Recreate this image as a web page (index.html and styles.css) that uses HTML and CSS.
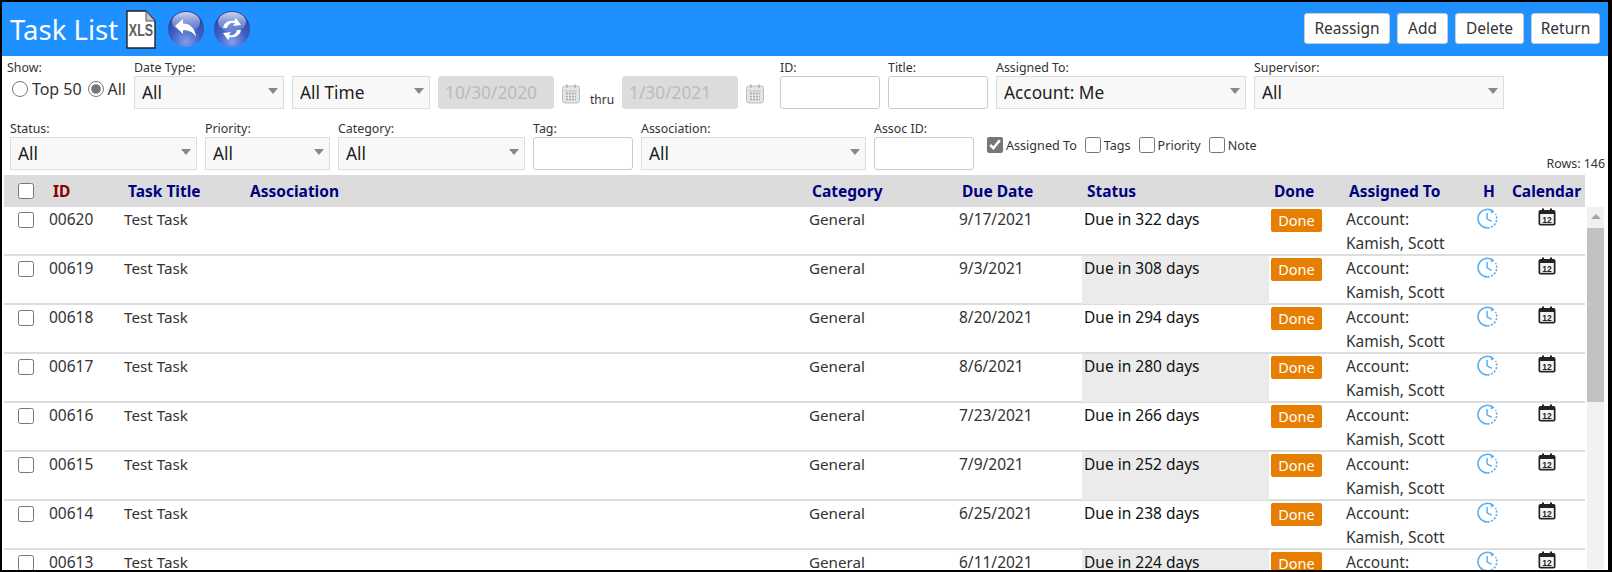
FILE: index.html
```html
<!DOCTYPE html>
<html lang="en">
<head>
    <meta charset="UTF-8">
    <title>Task List</title>
    <link rel="stylesheet" href="styles.css">
</head>
<body>
    <svg class="defs" width="0" height="0">
        <defs>
            <radialGradient id="glossy" cx="50%" cy="85%" r="75%">
                <stop offset="0%" stop-color="#7f9fee"/>
                <stop offset="55%" stop-color="#3f5fc4"/>
                <stop offset="100%" stop-color="#2c479f"/>
            </radialGradient>
            <linearGradient id="shine" x1="0" y1="0" x2="0" y2="1">
                <stop offset="0%" stop-color="#dfe8fb" stop-opacity="0.9"/>
                <stop offset="100%" stop-color="#8ba6ea" stop-opacity="0.3"/>
            </linearGradient>
            <symbol id="clock" viewBox="0 0 20 20">
                <path d="M15.5 3.4A8.8 8.8 0 1 0 10 18.9" fill="none" stroke="#5aaef0" stroke-width="1.5"/>
                <path d="M10 18.9a8.8 8.8 0 0 0 7.6-13.2" fill="none" stroke="#5aaef0" stroke-width="1.5" stroke-dasharray="2 1.4"/>
                <path d="M13.2 1.2l3.4 2.4-3.4 1.6z" fill="#5aaef0"/>
                <path d="M9.6 4.8v5.6l4.4 2.4" fill="none" stroke="#5aaef0" stroke-width="1.4"/>
            </symbol>
            <symbol id="calendar" viewBox="0 0 18 18">
                <rect x="0.5" y="2" width="17" height="15.5" rx="2" fill="#222"/>
                <rect x="4" y="0.5" width="2" height="3.5" fill="#222"/>
                <rect x="12" y="0.5" width="2" height="3.5" fill="#222"/>
                <rect x="2.2" y="6" width="13.6" height="9.8" fill="#f4f4f4"/>
                <text x="9" y="14.6" text-anchor="middle" class="cal-num">12</text>
            </symbol>
            <symbol id="picker" viewBox="0 0 18 20">
                <rect x="0.5" y="2" width="17" height="17" rx="2.5" fill="#e4e4e4" stroke="#bdbdbd"/>
                <rect x="4" y="0.5" width="1.6" height="3.5" fill="#b5b5b5"/>
                <rect x="12.4" y="0.5" width="1.6" height="3.5" fill="#b5b5b5"/>
                <path d="M3 7h12" stroke="#bdbdbd"/>
                <path d="M4 9.5h10M4 12.5h10M4 15.5h10" stroke="#a9a9a9" stroke-width="1.6" stroke-dasharray="2 1"/>
            </symbol>
        </defs>
    </svg>

    <div class="frame">
        <header class="topbar">
            <div class="topbar-left">
                <h1>Task List</h1>
                <svg class="xls" width="30" height="39" viewBox="0 0 30 39">
                    <path d="M1 1h19l9 10v27H1z" fill="#fff" stroke="#222" stroke-width="1.4"/>
                    <path d="M20 1v10h9z" fill="#c8c8c8" stroke="#555"/>
                    <text text-anchor="middle" transform="translate(15 26) scale(1 1.3)" class="xls-text">XLS</text>
                </svg>
                <svg class="round-btn" width="36" height="36" viewBox="0 0 36 36">
                    <circle cx="18" cy="18" r="18" fill="url(#glossy)"/>
                    <ellipse cx="18" cy="11" rx="14" ry="10" fill="url(#shine)"/>
                    <path d="M7 15l8-7v4.500c7 0 12 4.500 13 13.500-3-5-7-7-13-7v4z" fill="#fff"/>
                </svg>
                <svg class="round-btn" width="36" height="36" viewBox="0 0 36 36">
                    <circle cx="18" cy="18" r="18" fill="url(#glossy)"/>
                    <ellipse cx="18" cy="11" rx="14" ry="10" fill="url(#shine)"/>
                    <path d="M9 17c1-5 5-8 11-7l2-3 5 7-8 1 2-3c-4-1-7 1-8 5zM27 19c-1 5-5 8-11 7l-2 3-5-7 8-1-2 3c4 1 7-1 8-5z" fill="#fff"/>
                </svg>
            </div>
            <div class="topbar-right">
                <button class="top-btn btn-86">Reassign</button>
                <button class="top-btn btn-51">Add</button>
                <button class="top-btn btn-69">Delete</button>
                <button class="top-btn btn-69">Return</button>
            </div>
        </header>

        <section class="filters">
            <div class="filter-row row-one">
                <div class="field w-show">
                    <label>Show:</label>
                    <div class="radios">
                        <input type="radio" name="show"><span>Top 50</span>
                        <input type="radio" name="show" checked><span>All</span>
                    </div>
                </div>
                <div class="field w-150"><label>Date Type:</label><div class="sel"><select><option>All</option></select></div></div>
                <div class="field w-138"><label>&nbsp;</label><div class="sel"><select><option>All Time</option></select></div></div>
                <div class="field w-116"><label>&nbsp;</label><input class="date" type="text" value="10/30/2020" disabled></div>
                <svg class="picker" width="18" height="20"><use href="#picker"/></svg>
                <span class="thru">thru</span>
                <div class="field w-116"><label>&nbsp;</label><input class="date" type="text" value="1/30/2021" disabled></div>
                <svg class="picker" width="18" height="20"><use href="#picker"/></svg>
                <div class="field w-100 id-field"><label>ID:</label><input class="txt" type="text"></div>
                <div class="field w-100"><label>Title:</label><input class="txt" type="text"></div>
                <div class="field w-250"><label>Assigned To:</label><div class="sel"><select><option>Account: Me</option></select></div></div>
                <div class="field w-250"><label>Supervisor:</label><div class="sel"><select><option>All</option></select></div></div>
            </div>
            <div class="filter-row row-two">
                <div class="field w-187"><label>Status:</label><div class="sel"><select><option>All</option></select></div></div>
                <div class="field w-125"><label>Priority:</label><div class="sel"><select><option>All</option></select></div></div>
                <div class="field w-187"><label>Category:</label><div class="sel"><select><option>All</option></select></div></div>
                <div class="field w-100"><label>Tag:</label><input class="txt" type="text"></div>
                <div class="field w-225"><label>Association:</label><div class="sel"><select><option>All</option></select></div></div>
                <div class="field w-100"><label>Assoc ID:</label><input class="txt" type="text"></div>
                <div class="columns-toggle">
                    <input type="checkbox" checked><span>Assigned To</span>
                    <input type="checkbox"><span>Tags</span>
                    <input type="checkbox"><span>Priority</span>
                    <input type="checkbox"><span>Note</span>
                </div>
                <div class="row-count">Rows: 146</div>
            </div>
        </section>

        <div class="grid-head">
            <div class="cell-check"><input type="checkbox"></div>
            <div class="sorted">ID</div>
            <div class="title">Task Title</div>
            <div>Association</div>
            <div>Category</div>
            <div>Due Date</div>
            <div class="status">Status</div>
            <div class="cell-done">Done</div>
            <div class="assigned">Assigned To</div>
            <div class="center">H</div>
            <div class="center">Calendar</div>
        </div>

        <div class="grid-wrap">
            <div class="grid-body">
                <div class="task-row">
                    <div class="cell-check"><input type="checkbox"></div><div>00620</div><div class="plain">Test Task</div><div></div><div class="plain">General</div><div>9/17/2021</div>
                    <div class="status">Due in 322 days</div><div class="cell-done"><span class="done-btn">Done</span></div><div class="assigned">Account: Kamish, Scott</div>
                    <div class="center"><svg class="ic-clock" width="21" height="21"><use href="#clock"/></svg></div><div class="center"><svg class="ic-cal" width="18" height="18"><use href="#calendar"/></svg></div>
                </div>
                <div class="task-row shaded">
                    <div class="cell-check"><input type="checkbox"></div><div>00619</div><div class="plain">Test Task</div><div></div><div class="plain">General</div><div>9/3/2021</div>
                    <div class="status">Due in 308 days</div><div class="cell-done"><span class="done-btn">Done</span></div><div class="assigned">Account: Kamish, Scott</div>
                    <div class="center"><svg class="ic-clock" width="21" height="21"><use href="#clock"/></svg></div><div class="center"><svg class="ic-cal" width="18" height="18"><use href="#calendar"/></svg></div>
                </div>
                <div class="task-row">
                    <div class="cell-check"><input type="checkbox"></div><div>00618</div><div class="plain">Test Task</div><div></div><div class="plain">General</div><div>8/20/2021</div>
                    <div class="status">Due in 294 days</div><div class="cell-done"><span class="done-btn">Done</span></div><div class="assigned">Account: Kamish, Scott</div>
                    <div class="center"><svg class="ic-clock" width="21" height="21"><use href="#clock"/></svg></div><div class="center"><svg class="ic-cal" width="18" height="18"><use href="#calendar"/></svg></div>
                </div>
                <div class="task-row shaded">
                    <div class="cell-check"><input type="checkbox"></div><div>00617</div><div class="plain">Test Task</div><div></div><div class="plain">General</div><div>8/6/2021</div>
                    <div class="status">Due in 280 days</div><div class="cell-done"><span class="done-btn">Done</span></div><div class="assigned">Account: Kamish, Scott</div>
                    <div class="center"><svg class="ic-clock" width="21" height="21"><use href="#clock"/></svg></div><div class="center"><svg class="ic-cal" width="18" height="18"><use href="#calendar"/></svg></div>
                </div>
                <div class="task-row">
                    <div class="cell-check"><input type="checkbox"></div><div>00616</div><div class="plain">Test Task</div><div></div><div class="plain">General</div><div>7/23/2021</div>
                    <div class="status">Due in 266 days</div><div class="cell-done"><span class="done-btn">Done</span></div><div class="assigned">Account: Kamish, Scott</div>
                    <div class="center"><svg class="ic-clock" width="21" height="21"><use href="#clock"/></svg></div><div class="center"><svg class="ic-cal" width="18" height="18"><use href="#calendar"/></svg></div>
                </div>
                <div class="task-row shaded">
                    <div class="cell-check"><input type="checkbox"></div><div>00615</div><div class="plain">Test Task</div><div></div><div class="plain">General</div><div>7/9/2021</div>
                    <div class="status">Due in 252 days</div><div class="cell-done"><span class="done-btn">Done</span></div><div class="assigned">Account: Kamish, Scott</div>
                    <div class="center"><svg class="ic-clock" width="21" height="21"><use href="#clock"/></svg></div><div class="center"><svg class="ic-cal" width="18" height="18"><use href="#calendar"/></svg></div>
                </div>
                <div class="task-row">
                    <div class="cell-check"><input type="checkbox"></div><div>00614</div><div class="plain">Test Task</div><div></div><div class="plain">General</div><div>6/25/2021</div>
                    <div class="status">Due in 238 days</div><div class="cell-done"><span class="done-btn">Done</span></div><div class="assigned">Account: Kamish, Scott</div>
                    <div class="center"><svg class="ic-clock" width="21" height="21"><use href="#clock"/></svg></div><div class="center"><svg class="ic-cal" width="18" height="18"><use href="#calendar"/></svg></div>
                </div>
                <div class="task-row shaded">
                    <div class="cell-check"><input type="checkbox"></div><div>00613</div><div class="plain">Test Task</div><div></div><div class="plain">General</div><div>6/11/2021</div>
                    <div class="status">Due in 224 days</div><div class="cell-done"><span class="done-btn">Done</span></div><div class="assigned">Account: Kamish, Scott</div>
                    <div class="center"><svg class="ic-clock" width="21" height="21"><use href="#clock"/></svg></div><div class="center"><svg class="ic-cal" width="18" height="18"><use href="#calendar"/></svg></div>
                </div>
            </div>
            <div class="scroll-track">
                <div class="scroll-arrow"></div>
                <div class="scroll-thumb"></div>
            </div>
        </div>
    </div>
</body>
</html>
```

FILE: styles.css
```css
* {
    box-sizing: border-box;
}

html, body {
    margin: 0;
    height: 100%;
    overflow: hidden;
}

body {
    font-family: "Noto Sans", "Open Sans", sans-serif;
    color: #333;
    background: #000;
}

.defs {
    position: absolute;
}

.frame {
    height: 572px;
    border: 2px solid #000;
    border-right-width: 4px;
    background: #fff;
    overflow: hidden;
}

/* top bar */
.topbar {
    height: 54px;
    background: #1e90ff;
    display: flex;
    justify-content: space-between;
    align-items: center;
}

.topbar-left {
    display: flex;
    align-items: center;
    padding-left: 8px;
}

.topbar-left h1 {
    margin: 0;
    width: 116px;
    font-size: 27.5px;
    font-weight: 400;
    color: #fff;
    white-space: nowrap;
}

.xls {
    margin-right: 12px;
}

.xls-text {
    font-family: "Liberation Sans", sans-serif;
    font-size: 12.5px;
    font-weight: bold;
    fill: #5c5c5c;
}

.round-btn {
    margin-right: 10px;
}

.topbar-right {
    display: flex;
    gap: 7px;
    padding-right: 8px;
    padding-bottom: 2px;
}

.top-btn {
    height: 31px;
    padding: 0;
    font-family: inherit;
    font-size: 15.5px;
    color: #333;
    background: #fff;
    border: 1px solid #ccc;
    border-radius: 3px;
}

.btn-86 { width: 86px; }
.btn-51 { width: 51px; }
.btn-69 { width: 69px; }

/* filters */
.filters {
    height: 119px;
    position: relative;
}

.filter-row {
    display: flex;
    gap: 8px;
}

.row-one {
    height: 65px;
    padding-left: 5px;
    padding-top: 4px;
}

.row-two {
    padding-left: 8px;
}

.field {
    display: flex;
    flex-direction: column;
    flex: none;
}

.field label {
    height: 16px;
    font-size: 12.4px;
    line-height: 16px;
    white-space: nowrap;
}

.w-show { width: 119px; }
.w-100 { width: 100px; }
.w-116 { width: 116px; }
.w-125 { width: 125px; }
.w-138 { width: 138px; }
.w-150 { width: 150px; }
.w-187 { width: 187px; }
.w-225 { width: 225px; }
.w-250 { width: 250px; }

.id-field {
    margin-left: 8px;
}

.radios {
    display: flex;
    align-items: center;
    height: 26px;
    font-size: 16px;
    white-space: nowrap;
}

.radios input {
    width: 16px;
    height: 16px;
    margin: 0 4px 0 5px;
    accent-color: #777;
}

.radios input + span + input {
    margin-left: 6px;
}

.sel {
    position: relative;
}

.sel::after {
    content: "";
    position: absolute;
    top: 12px;
    right: 6px;
    border-left: 5px solid transparent;
    border-right: 5px solid transparent;
    border-top: 6px solid #888;
}

.sel select {
    appearance: none;
    width: 100%;
    height: 33px;
    padding: 0 7px;
    font-family: inherit;
    font-size: 17.3px;
    color: #222;
    background: #f8f8f8;
    border: 1px solid #ddd;
    border-radius: 0;
}

.txt, .date {
    width: 100%;
    height: 33px;
    padding: 0 6px;
    font-family: inherit;
    font-size: 17.3px;
    border: 1px solid #ccc;
    border-radius: 3px;
    background: #fff;
}

.date {
    color: #bbb;
    background: #dcdcdc;
    border-color: #dcdcdc;
}

.picker {
    flex: none;
    margin-top: 24px;
}

.thru {
    flex: none;
    width: 24px;
    margin: 31px 0 0 2px;
    font-size: 12px;
    color: #333;
}

.columns-toggle {
    display: flex;
    align-items: center;
    height: 16px;
    margin: 16px 0 0 5px;
    font-size: 12.6px;
    white-space: nowrap;
}

.columns-toggle input {
    width: 16px;
    height: 16px;
    margin: 0 3px 0 8px;
    accent-color: #777;
}

.columns-toggle input:first-child {
    margin-left: 0;
}

.row-count {
    position: absolute;
    right: 3px;
    top: 99px;
    font-size: 12.4px;
}

/* task grid */
.grid-head, .task-row {
    display: grid;
    grid-template-columns: 41px 75px 123px 562px 150px 127px 187px 74px 127px 38px 77px;
    width: 1581px;
}

.grid-head {
    height: 32px;
    margin-left: 2px;
    align-items: center;
    background: #dcdcdc;
    font-size: 15.5px;
    font-weight: bold;
    color: #000080;
    white-space: nowrap;
}

.grid-head > div {
    padding-left: 7px;
}

.grid-head .sorted {
    padding-left: 8px;
    color: #8b0000;
}

.grid-head .title {
    padding-left: 8px;
}

.grid-head .status {
    padding-left: 5px;
}

.grid-head .cell-done {
    padding-left: 5px;
}

.grid-head .assigned {
    padding-left: 6px;
}

.grid-head .center, .task-row .center {
    padding-left: 0;
    text-align: center;
}

.grid-head .cell-check, .task-row .cell-check {
    padding: 0 0 0 14px;
}

.cell-check input {
    display: block;
    width: 16px;
    height: 16px;
    margin: 0;
}

.grid-wrap {
    display: flex;
    margin-left: 2px;
}

.grid-body {
    width: 1581px;
    flex: none;
}

.task-row {
    height: 49px;
    border-bottom: 2px solid #ddd;
    font-size: 15.5px;
    line-height: 23px;
}

.task-row > div {
    padding: 1px 4px 0;
}

.task-row .plain {
    font-size: 15.2px;
}

.task-row .cell-check {
    padding-top: 5px;
}

.task-row .status {
    padding-left: 2px;
    color: #111;
}

.task-row.shaded .status {
    background: #ebebeb;
}

.task-row .assigned {
    padding-left: 3px;
    padding-top: 0;
    line-height: 24px;
}

.task-row .cell-done {
    padding: 2px 0 0 2px;
}

.done-btn {
    display: block;
    width: 51px;
    height: 23px;
    font-size: 14.5px;
    line-height: 22px;
    text-align: center;
    color: #fff;
    background: #e67e00;
    border-radius: 2px;
}

.ic-clock, .ic-cal {
    display: block;
    margin: 0 auto;
}

.task-row .ic-cal {
    position: relative;
    left: 2px;
}

.cal-num {
    font-family: "Liberation Sans", sans-serif;
    font-size: 8.5px;
    font-weight: bold;
    fill: #222;
}

.scroll-track {
    flex: none;
    width: 17px;
    height: 362px;
    margin-left: 2px;
    background: #f1f1f1;
}

.scroll-arrow {
    width: 0;
    margin: 7px auto 0;
    border-left: 5px solid transparent;
    border-right: 5px solid transparent;
    border-bottom: 5px solid #a3a3a3;
}

.scroll-thumb {
    height: 174px;
    margin-top: 9px;
    background: #c1c1c1;
}
```
